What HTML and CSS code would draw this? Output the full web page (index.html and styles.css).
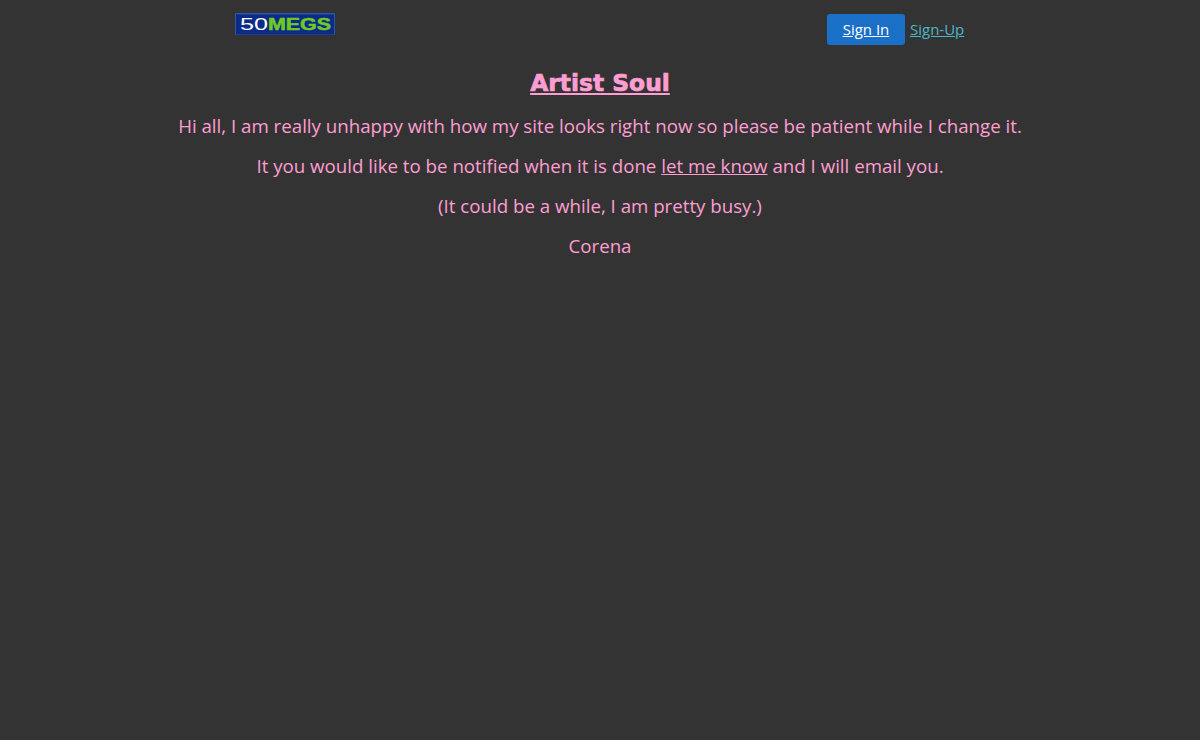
FILE: index.html
```html
<!DOCTYPE html>
<html lang="en">

<head>
  <meta charset="UTF-8">
  <title>Artist Soul</title>
  <link rel="stylesheet" href="styles.css">
</head>

<body>
  <header class="topbar">
    <a href="#" class="logo">
      <svg width="100" height="22" viewBox="0 0 100 22">
        <rect width="100" height="22" rx="1" fill="#2a55a8"/>
        <rect x="1" y="1.5" width="98" height="20" fill="#0c2a86"/>
        <text class="logo__num" x="5" y="16.5" textLength="28" lengthAdjust="spacingAndGlyphs">50</text>
        <text class="logo__word" x="33" y="16.5" textLength="63" lengthAdjust="spacingAndGlyphs">MEGS</text>
      </svg>
    </a>
    <div class="auth">
      <a href="#" class="auth__signin">Sign In</a>
      <a href="#" class="auth__signup">Sign-Up</a>
    </div>
  </header>
  <main class="content">
    <h1 class="content__title"><a href="#">Artist Soul</a></h1>
    <p>Hi all, I am really unhappy with how my site looks right now so please be patient while I change it.</p>
    <p>It you would like to be notified when it is done <a href="#">let me know</a> and I will email you.</p>
    <p>(It could be a while, I am pretty busy.)</p>
    <p>Corena</p>
  </main>
</body>

</html>
```

FILE: styles.css
```css
* {
  margin: 0;
  padding: 0;
  box-sizing: border-box;
}

html,
body {
  height: 100%;
}

body {
  background-color: #333;
  color: #ff9ed2;
  font-family: 'Open Sans', 'Noto Sans', sans-serif;
  overflow: hidden;
}

a {
  color: inherit;
}

.topbar {
  display: flex;
  justify-content: space-between;
  align-items: flex-start;
  height: 57px;
  padding: 13px 235px 0;
}

.logo {
  display: block;
  height: 22px;
}

.logo svg {
  display: block;
}

.logo__num {
  fill: #fff;
  font-family: 'Liberation Sans', sans-serif;
  font-size: 16px;
}

.logo__word {
  fill: #6fca22;
  stroke: #6fca22;
  stroke-width: 0.5;
  font-family: 'Liberation Sans', sans-serif;
  font-size: 16px;
  font-weight: 700;
}

.auth {
  display: flex;
  align-items: center;
  gap: 5px;
  width: 138px;
  margin-top: 1px;
  font-size: 15px;
}

.auth__signin {
  display: block;
  width: 78px;
  height: 31px;
  line-height: 30px;
  text-align: center;
  background-color: #1a6fc7;
  border-radius: 3px;
  color: #fff;
}

.auth__signup {
  color: #4db6c4;
  margin-top: -1px;
}

.content {
  text-align: center;
  font-size: 18.7px;
}

.content p {
  height: 40px;
  line-height: 26px;
}

.content__title {
  height: 56px;
  font-family: 'DejaVu Sans', sans-serif;
  font-size: 23.4px;
  font-weight: 700;
  line-height: 52px;
  -webkit-text-stroke: 0.7px #ff9ed2;
}
```
